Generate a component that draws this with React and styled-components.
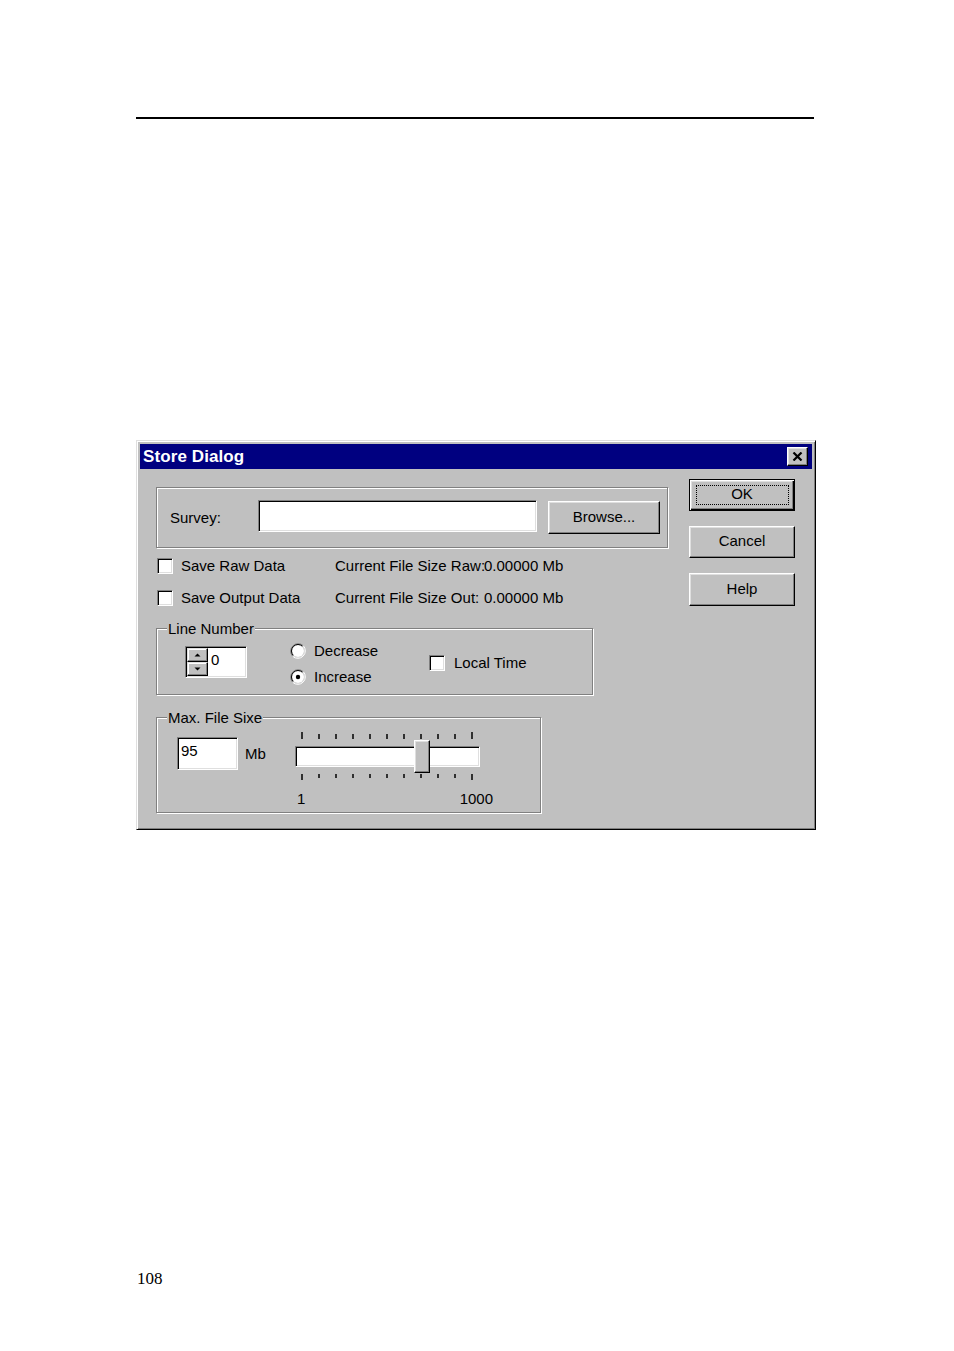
import React from "react";
import styled, { createGlobalStyle, css } from "styled-components";

const GlobalStyle = createGlobalStyle`
  html, body { margin: 0; padding: 0; background: #fff; }
  body { font-family: "Liberation Sans", Arial, sans-serif; color: #000; }
  * { box-sizing: border-box; }
`;

const GRAY = "#c0c0c0";
const DARK = "#808080";
const LIGHT = "#dfdfdf";

const raised = css`
  border: 1px solid;
  border-color: #fff #000 #000 #fff;
  box-shadow: inset -1px -1px 0 ${DARK}, inset 1px 1px 0 ${LIGHT};
  background: ${GRAY};
`;

const sunken = css`
  border: 1px solid;
  border-color: ${DARK} #fff #fff ${DARK};
  box-shadow: inset 1px 1px 0 #000, inset -1px -1px 0 ${LIGHT};
  background: #fff;
`;

const etched = css`
  border: 1px solid ${DARK};
  box-shadow: inset 1px 1px 0 #fff, 1px 1px 0 #fff;
`;

const uiFont = css`
  font-family: "Liberation Sans", Arial, sans-serif;
  font-size: 15px;
  line-height: 18px;
  color: #000;
  white-space: nowrap;
`;

/* ---------- page ---------- */
const Page = styled.div`
  width: 954px;
  min-height: 1351px;
  padding-left: 136px;
  display: flex;
  flex-direction: column;
  align-items: flex-start;
`;

const HeaderRule = styled.div`
  margin-top: 117px;
  width: 678px;
  height: 2px;
  background: #000;
`;

const PageNumber = styled.div`
  margin-top: 439px;
  margin-left: 1px;
  font-family: "Liberation Serif", "Times New Roman", serif;
  font-size: 17px;
  line-height: 20px;
`;

/* ---------- window ---------- */
const Window = styled.div`
  margin-top: 321px;
  width: 680px;
  background: ${GRAY};
  border: 1px solid;
  border-color: ${LIGHT} #000 #000 ${LIGHT};
  box-shadow: inset 1px 1px 0 #fff, inset -1px -1px 0 ${DARK};
  padding: 3px;
  display: flex;
  flex-direction: column;
`;

const TitleBar = styled.div`
  height: 25px;
  background: #000080;
  display: flex;
  align-items: center;
  justify-content: space-between;
  padding: 0 4px 0 3px;
`;

const TitleText = styled.span`
  font-family: "Liberation Sans", Arial, sans-serif;
  font-weight: bold;
  font-size: 17px;
  color: #fff;
  letter-spacing: 0.1px;
`;

const CloseButton = styled.div`
  ${raised};
  width: 21px;
  height: 19px;
  display: flex;
  align-items: center;
  justify-content: center;
`;

const Body = styled.div`
  display: grid;
  grid-template-columns: 512px 106px;
  column-gap: 21px;
  padding: 10px 0 13px 16px;
  align-items: start;
`;

const LeftColumn = styled.div`
  margin-top: 8px;
  display: flex;
  flex-direction: column;
`;

const ButtonColumn = styled.div`
  display: flex;
  flex-direction: column;
  gap: 15px;
`;

/* ---------- buttons ---------- */
const PushButton = styled.div`
  ${raised};
  ${uiFont};
  position: relative;
  width: ${(p) => p.$w}px;
  height: ${(p) => p.$h}px;
  display: flex;
  align-items: center;
  justify-content: center;
  padding-bottom: 2px;
  ${(p) =>
    p.$default &&
    css`
      border-color: #000;
      box-shadow: inset 1px 1px 0 #fff, inset -1px -1px 0 #000,
        inset -2px -2px 0 ${DARK}, inset 2px 2px 0 ${LIGHT};
    `}
`;

const FocusRing = styled.span`
  position: absolute;
  top: 5px;
  left: 6px;
  right: 5px;
  bottom: 5px;
  border: 1px dotted #000;
`;

/* ---------- groups ---------- */
const SurveyGroup = styled.div`
  ${etched};
  width: 512px;
  height: 61px;
  display: flex;
  align-items: center;
  padding-left: 13px;
`;

const FieldLabel = styled.span`
  ${uiFont};
  width: ${(p) => p.$w || "auto"};
  flex: none;
`;

const TextField = styled.div`
  ${sunken};
  ${uiFont};
  width: ${(p) => p.$w}px;
  height: ${(p) => p.$h}px;
  margin-top: ${(p) => p.$mt || 0}px;
  padding: 4px 0 0 3px;
  flex: none;
`;

const Group = styled.div`
  ${etched};
  position: relative;
  width: ${(p) => p.$w}px;
  height: ${(p) => p.$h}px;
  margin-top: ${(p) => p.$mt}px;
`;

const Legend = styled.span`
  ${uiFont};
  position: absolute;
  top: -9px;
  left: 10px;
  padding: 0 1px;
  background: ${GRAY};
`;

const CheckGrid = styled.div`
  margin-top: 2px;
  display: grid;
  grid-template-columns: 179px 149px auto;
  grid-auto-rows: 32px;
  align-items: center;
`;

const Text = styled.span`
  ${uiFont};
`;

const CheckLabel = styled.label`
  ${uiFont};
  display: flex;
  align-items: center;
  gap: ${(p) => p.$gap || 8}px;
  padding-left: ${(p) => p.$pl || 0}px;
`;

const CheckBox = styled.span`
  ${sunken};
  width: 16px;
  height: 16px;
  flex: none;
`;

const LineRow = styled.div`
  height: 100%;
  display: flex;
  align-items: center;
  padding-left: 28px;
`;

const Spinner = styled.div`
  ${sunken};
  width: 62px;
  height: 32px;
  display: flex;
  padding: 1px;
`;

const SpinButtons = styled.div`
  display: flex;
  flex-direction: column;
  width: 21px;
  flex: none;
`;

const SpinButton = styled.div`
  border: 1px solid;
  border-color: ${LIGHT} #000 #000 ${LIGHT};
  box-shadow: inset -1px -1px 0 ${DARK}, inset 1px 1px 0 #fff;
  background: ${GRAY};
  flex: 1;
  display: flex;
  align-items: center;
  justify-content: center;
`;

const SpinValue = styled.span`
  ${uiFont};
  padding: 3px 0 0 3px;
`;

const RadioGroup = styled.div`
  width: 139px;
  margin-left: 43px;
  margin-top: 5px;
  display: flex;
  flex-direction: column;
`;

const RadioLabel = styled.label`
  ${uiFont};
  height: 26px;
  display: flex;
  align-items: center;
  gap: 8px;
`;

const LocalTime = styled(CheckLabel)`
  margin-top: 2px;
`;

const SizeRow = styled.div`
  display: flex;
  align-items: flex-start;
  padding-left: 20px;
`;

const UnitLabel = styled.span`
  ${uiFont};
  width: 50px;
  height: 33px;
  margin: 19px 0 0 7px;
  display: flex;
  align-items: center;
  padding-top: 1px;
`;

/* ---------- slider ---------- */
const Slider = styled.div`
  position: relative;
  width: 185px;
  margin-top: 14px;
  display: flex;
  flex-direction: column;
`;

const TickSvg = styled.svg`
  display: block;
`;

const Track = styled.div`
  ${sunken};
  height: 21px;
`;

const Thumb = styled.div`
  ${raised};
  position: absolute;
  top: 8px;
  left: ${(p) => p.$left}px;
  width: 16px;
  height: 33px;
`;

const ScaleLabels = styled.div`
  ${uiFont};
  margin-top: 9px;
  margin-right: -13px;
  padding-left: 2px;
  display: flex;
  justify-content: space-between;
`;

/* ---------- drawings ---------- */
const TICKS = Array.from({ length: 11 }, (_, i) => 7 + 17 * i);

function Ticks({ side }) {
  return (
    <TickSvg width="185" height="14" viewBox="0 0 185 14">
      {TICKS.map((x, i) => {
        const end = i === 0 || i === TICKS.length - 1;
        const y1 = side === "top" ? (end ? 0 : 2) : 7;
        const y2 = side === "top" ? 7 : end ? 13 : 11;
        return <rect key={x} x={x - 0.75} y={y1} width="1.5" height={y2 - y1} fill="#000" />;
      })}
    </TickSvg>
  );
}

function RadioMark({ checked }) {
  return (
    <svg width="16" height="16" viewBox="0 0 16 16" style={{ flex: "none" }}>
      <circle cx="8" cy="8" r="6" fill="#fff" />
      <path d="M13.3 2.7 A7.5 7.5 0 0 0 2.7 13.3" fill="none" stroke={DARK} strokeWidth="1" />
      <path d="M2.7 13.3 A7.5 7.5 0 0 0 13.3 2.7" fill="none" stroke="#fff" strokeWidth="1" />
      <path d="M12.6 3.4 A6.5 6.5 0 0 0 3.4 12.6" fill="none" stroke="#000" strokeWidth="1" />
      <path d="M3.4 12.6 A6.5 6.5 0 0 0 12.6 3.4" fill="none" stroke={LIGHT} strokeWidth="1" />
      {checked && <circle cx="8" cy="8" r="2.2" fill="#000" />}
    </svg>
  );
}

function Arrow({ up }) {
  return (
    <svg width="7" height="4" viewBox="0 0 7 4">
      <polygon points={up ? "0.5,3.5 3.5,0.5 6.5,3.5" : "0.5,0.5 3.5,3.5 6.5,0.5"} fill="#000" />
    </svg>
  );
}

function CloseGlyph() {
  return (
    <svg width="11" height="9" viewBox="0 0 11 9">
      <path d="M1.5 0.5 L9.5 8.5 M9.5 0.5 L1.5 8.5" stroke="#000" strokeWidth="2.2" />
    </svg>
  );
}

export default function App() {
  return (
    <>
      <GlobalStyle />
      <Page>
        <HeaderRule />
        <Window>
          <TitleBar>
            <TitleText>Store Dialog</TitleText>
            <CloseButton>
              <CloseGlyph />
            </CloseButton>
          </TitleBar>
          <Body>
            <LeftColumn>
              <SurveyGroup>
                <FieldLabel $w="88px">Survey:</FieldLabel>
                <TextField $w={279} $h={32} $mt={-3} />
                <PushButton $w={112} $h={33} style={{ marginLeft: 11 }}>
                  Browse...
                </PushButton>
              </SurveyGroup>

              <CheckGrid>
                <CheckLabel $pl={1}>
                  <CheckBox />
                  Save Raw Data
                </CheckLabel>
                <Text>Current File Size Raw:</Text>
                <Text>0.00000 Mb</Text>
                <CheckLabel $pl={1}>
                  <CheckBox />
                  Save Output Data
                </CheckLabel>
                <Text>Current File Size Out:</Text>
                <Text>0.00000 Mb</Text>
              </CheckGrid>

              <Group $w={437} $h={67} $mt={14}>
                <Legend>Line Number</Legend>
                <LineRow>
                  <Spinner>
                    <SpinButtons>
                      <SpinButton>
                        <Arrow up />
                      </SpinButton>
                      <SpinButton>
                        <Arrow />
                      </SpinButton>
                    </SpinButtons>
                    <SpinValue>0</SpinValue>
                  </Spinner>
                  <RadioGroup>
                    <RadioLabel>
                      <RadioMark />
                      Decrease
                    </RadioLabel>
                    <RadioLabel>
                      <RadioMark checked />
                      Increase
                    </RadioLabel>
                  </RadioGroup>
                  <LocalTime $gap={9}>
                    <CheckBox />
                    Local Time
                  </LocalTime>
                </LineRow>
              </Group>

              <Group $w={385} $h={96} $mt={22}>
                <Legend>Max. File Sixe</Legend>
                <SizeRow>
                  <TextField $w={61} $h={33} $mt={19}>
                    95
                  </TextField>
                  <UnitLabel>Mb</UnitLabel>
                  <Slider>
                    <Ticks side="top" />
                    <Track />
                    <Ticks side="bottom" />
                    <Thumb $left={119} />
                    <ScaleLabels>
                      <span>1</span>
                      <span>1000</span>
                    </ScaleLabels>
                  </Slider>
                </SizeRow>
              </Group>
            </LeftColumn>

            <ButtonColumn>
              <PushButton $w={106} $h={32} $default>
                OK
                <FocusRing />
              </PushButton>
              <PushButton $w={106} $h={32}>
                Cancel
              </PushButton>
              <PushButton $w={106} $h={33}>
                Help
              </PushButton>
            </ButtonColumn>
          </Body>
        </Window>
        <PageNumber>108</PageNumber>
      </Page>
    </>
  );
}
